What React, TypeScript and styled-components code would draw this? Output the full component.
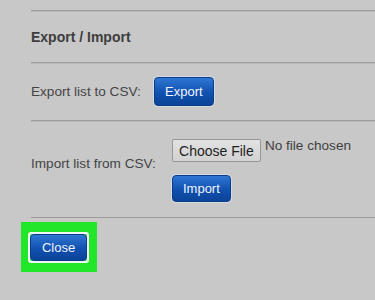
import React from "react";
import styled, { createGlobalStyle } from "styled-components";

const Global = createGlobalStyle`
  html, body { margin: 0; padding: 0; background: #c8c8c8; }
  body { font-family: "Liberation Sans", Arial, sans-serif; color: #444; }
`;

const Page = styled.div`
  width: 375px;
  height: 300px;
  padding-top: 10px;
  box-sizing: border-box;
  background: #c8c8c8;
  overflow: hidden;
`;

const Section = styled.div<{ $h: number }>`
  margin-left: 31px;
  border-top: 1px solid #9c9c9c;
  box-shadow: inset 0 1px 0 #b8b8b8;
  height: ${(p) => p.$h}px;
  box-sizing: border-box;
  display: flex;
`;

const Heading = styled.h2`
  margin: 0;
  align-self: center;
  font-size: 14px;
  font-weight: bold;
  color: #3d3d3d;
`;

const Row = styled(Section)`
  align-items: center;
  gap: 13px;
`;

const ImportRow = styled(Section)`
  align-items: flex-start;
  padding-top: 18px;
  gap: 16px;
`;

const Label = styled.span<{ $top?: number }>`
  font-size: 13.6px;
  color: #454545;
  margin-top: ${(p) => p.$top ?? 0}px;
  line-height: 16px;
`;

const Column = styled.div`
  display: flex;
  flex-direction: column;
  gap: 13px;
`;

const FileLine = styled.div`
  display: flex;
  align-items: flex-start;
  gap: 4px;
`;

const FileButton = styled.button`
  width: 89px;
  height: 23px;
  padding: 0;
  font-family: "Liberation Sans", Arial, sans-serif;
  font-size: 14px;
  color: #1e1e1e;
  background: linear-gradient(#e2e2e2, #d2d2d2);
  border: 1px solid #979797;
  border-radius: 2px;
`;

const FileText = styled.span`
  font-size: 13.6px;
  color: #3e3e3e;
  line-height: 16px;
  margin-top: -1px;
`;

const BlueButton = styled.button<{ $w: number; $h: number }>`
  width: ${(p) => p.$w}px;
  height: ${(p) => p.$h}px;
  padding: 0;
  font-family: "Liberation Sans", Arial, sans-serif;
  font-size: 13px;
  color: #f2f6ff;
  background: linear-gradient(#2f76d2, #1151b0 55%, #0b4398);
  border: 1px solid #0b3d88;
  border-radius: 4px;
  box-shadow: 0 0 0 1px rgba(225, 235, 250, 0.55);
`;

const Footer = styled.div`
  padding: 4px 0 0 21px;
  display: flex;
`;

const Highlight = styled.div`
  background: #22e62a;
  padding: 10px 8px 9px 7px;
  display: flex;
`;

const WhiteRing = styled.div`
  border: 2px solid #f4f8f4;
  border-radius: 3px;
  display: flex;
`;

export default function App() {
  return (
    <>
      <Global />
      <Page>
        <Section $h={52}>
          <Heading>Export / Import</Heading>
        </Section>
        <Row $h={58}>
          <Label>Export list to CSV:</Label>
          <BlueButton $w={60} $h={29}>Export</BlueButton>
        </Row>
        <ImportRow $h={97}>
          <Label $top={17}>Import list from CSV:</Label>
          <Column>
            <FileLine>
              <FileButton>Choose File</FileButton>
              <FileText>No file chosen</FileText>
            </FileLine>
            <BlueButton $w={59} $h={27}>Import</BlueButton>
          </Column>
        </ImportRow>
        <Section $h={0} />
        <Footer>
          <Highlight>
            <WhiteRing>
              <BlueButton $w={57} $h={27}>Close</BlueButton>
            </WhiteRing>
          </Highlight>
        </Footer>
      </Page>
    </>
  );
}
